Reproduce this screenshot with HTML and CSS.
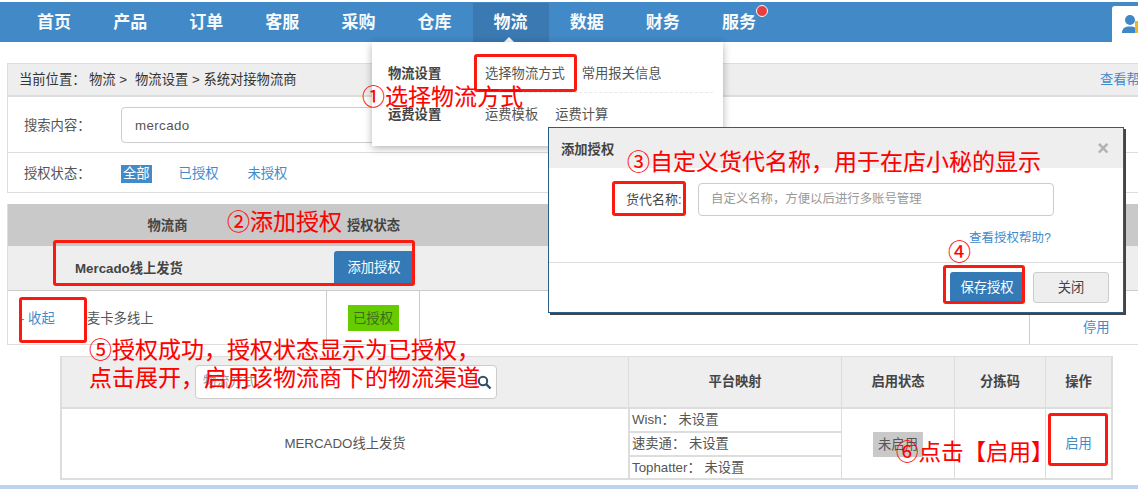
FILE: index.html
```html
<!DOCTYPE html>
<html lang="zh">
<head>
<meta charset="utf-8">
<title>物流设置</title>
<link rel="stylesheet" href="styles.css">
</head>
<body>
<div class="page">
  <nav class="nav">
    <a class="nav-item">首页</a><a class="nav-item">产品</a><a class="nav-item">订单</a><a class="nav-item">客服</a><a class="nav-item">采购</a><a class="nav-item">仓库</a><a class="nav-item active">物流</a><a class="nav-item">数据</a><a class="nav-item">财务</a><a class="nav-item dot">服务</a>
    <div class="user-tab">
      <svg class="user-icon" width="16" height="18" viewBox="0 0 16 18"><circle cx="8" cy="5" r="5" fill="#3f87c6"/><path d="M0 18c0-5 3-6.500 8-6.500s7 1.500 7 6.500z" fill="#3f87c6"/><rect x="13" y="6" width="3" height="12" fill="#f0b429"/></svg>
    </div>
  </nav>

  <section class="panel">
    <div class="crumb">
      <span class="crumb-label">当前位置：</span><span class="crumb-path">物流 &gt;</span><span class="crumb-path">物流设置 &gt; 系统对接物流商</span>
      <a class="link crumb-help">查看帮助</a>
    </div>
    <div class="search-row">
      <span class="row-label">搜索内容：</span>
      <div class="search-input">mercado</div>
    </div>
    <div class="status-row">
      <span class="row-label">授权状态：</span>
      <span class="pill">全部</span><a class="link status-link">已授权</a><a class="link status-link">未授权</a>
    </div>
  </section>

  <section class="carriers">
    <div class="carriers-head">
      <span>物流商</span><span>授权状态</span>
    </div>
    <div class="carrier-bar">
      <b class="carrier-name">Mercado线上发货</b>
      <span class="btn-primary add-btn">添加授权</span>
    </div>
    <div class="carrier-row">
      <div class="carrier-cell"><a class="link collapse">- 收起</a><span class="carrier-sub">麦卡多线上</span></div>
      <div class="carrier-status"><span class="badge-ok">已授权</span></div>
      <div></div>
      <div class="carrier-op"><a class="link">停用</a></div>
    </div>
  </section>

  <section class="channels">
    <div class="ch-cell ch-head ch-search-cell">
      <div class="ch-search">
        <span>物流方式</span>
        <svg width="15" height="15" viewBox="0 0 15 15"><circle cx="6" cy="6" r="4.2" fill="none" stroke="#2f4f66" stroke-width="2"/><path d="M9 9l4.500 4.500" stroke="#2f4f66" stroke-width="2.400"/></svg>
      </div>
    </div>
    <div class="ch-cell ch-head">平台映射</div>
    <div class="ch-cell ch-head">启用状态</div>
    <div class="ch-cell ch-head">分拣码</div>
    <div class="ch-cell ch-head">操作</div>
    <div class="ch-cell">MERCADO线上发货</div>
    <div class="ch-map">
      <div class="map-row">Wish： 未设置</div>
      <div class="map-row">速卖通： 未设置</div>
      <div class="map-row">Tophatter： 未设置</div>
    </div>
    <div class="ch-cell"><span class="badge-off">未启用</span></div>
    <div class="ch-cell"></div>
    <div class="ch-cell"><a class="link">启用</a></div>
  </section>

  <div class="bottom-band"></div>

  <div class="dropdown">
    <div class="dd-row dd-row-first"><b class="dd-title">物流设置</b><a class="dd-link">选择物流方式</a><a class="dd-link">常用报关信息</a></div>
    <div class="dd-row"><b class="dd-title">运费设置</b><a class="dd-link">运费模板</a><a class="dd-link">运费计算</a></div>
  </div>

  <div class="modal">
    <div class="modal-head"><b>添加授权</b><span class="modal-close">×</span></div>
    <div class="modal-body">
      <div class="modal-field"><span class="modal-label">货代名称:</span><div class="modal-input">自定义名称，方便以后进行多账号管理</div></div>
      <a class="link modal-help">查看授权帮助?</a>
    </div>
    <div class="modal-foot">
      <span class="btn-primary save-btn">保存授权</span>
      <span class="btn-default">关闭</span>
    </div>
  </div>

  <div class="box box-1"></div>
  <div class="box box-2"></div>
  <div class="box box-3"></div>
  <div class="box box-4"></div>
  <div class="box box-5"></div>
  <div class="box box-6"></div>

  <div class="note note-1">①选择物流方式</div>
  <div class="note note-2">②添加授权</div>
  <div class="note note-3">③自定义货代名称，用于在店小秘的显示</div>
  <div class="note note-4">④</div>
  <div class="note note-5">⑤授权成功，授权状态显示为已授权，<br>点击展开，启用该物流商下的物流渠道</div>
  <div class="note note-6">⑥点击【启用】</div>
</div>
</body>
</html>
```
FILE: styles.css
```css
* { box-sizing: border-box; }
html, body { margin: 0; padding: 0; height: 100%; overflow: hidden; background: #fff; }
body { font: 13.3px/18px "Liberation Sans", "Noto Sans CJK SC", sans-serif; color: #555; }
.page { position: relative; width: 1138px; height: 489px; overflow: hidden; padding-top: 2px; }
a { color: inherit; text-decoration: none; }
.link { color: #428bca; }

.nav { height: 40px; background: #4189c7; display: flex; padding-left: 16px; position: relative; }
.nav-item { width: 76.1px; padding-top: 2px; text-align: center; color: #fff; font-size: 17px; font-weight: 700; line-height: 38px; position: relative; opacity: .96; }
.nav-item.active { background: #3a79b2; margin-top: 1px; padding-top: 1px; }
.nav-item.active::after { content: ""; position: absolute; left: 31px; bottom: 0; border: 5px solid transparent; border-top: 0; border-bottom-color: #fff; }
.nav-item.dot::after { content: ""; position: absolute; right: 9px; top: 3px; width: 10px; height: 10px; border-radius: 50%; background: #ee3b3b; border: 1px solid #fff; }
.user-tab { position: absolute; right: 0; bottom: 0; width: 26px; height: 36px; background: #fff; border-radius: 3px 0 0 0; padding: 9px 0 0 10px; }
.user-icon { display: block; }

.panel { margin: 21px -30px 0 7px; border: 1px solid #ddd; height: 130px; }
.crumb { height: 33px; background: #eee; border-bottom: 2px solid #ddd; display: flex; align-items: center; padding: 1px 11px 0; color: #333; }
.crumb-label { width: 70px; }
.crumb-path { margin-right: 8px; }
.crumb-help { margin-left: auto; margin-right: 2px; width: 54px; }
.search-row { height: 56px; border-bottom: 1px solid #ddd; display: flex; align-items: center; padding-left: 16px; }
.row-label { width: 97px; }
.search-row .row-label { margin-top: 2px; }
.search-input { width: 400px; height: 36px; border: 1px solid #ccc; border-radius: 4px; padding: 0 13px; line-height: 35px; letter-spacing: .4px; }
.status-row { height: 39px; display: flex; align-items: center; padding: 2px 0 0 16px; }
.pill { background: #428bca; color: #fff; padding: 0 2px; line-height: 18px; margin-right: 27px; }
.status-link { margin-right: 29px; }

.carriers { margin: 11px -30px 0 7px; border: 1px solid #ddd; border-width: 0 0 1px 1px; }
.carriers-head { height: 42px; padding-top: 2px; background: #c9c9c9; display: grid; grid-template-columns: 319px 93px; align-items: center; text-align: center; font-weight: 700; color: #444; }
.carrier-bar { height: 45px; background: #eee; border-bottom: 1px solid #ccc; display: flex; align-items: center; padding-left: 67px; }
.carrier-name { width: 259px; color: #444; margin-top: 2px; }
.btn-primary { background: #337ab7; color: #fff; text-align: center; border-radius: 3px; display: block; }
.add-btn { width: 80px; height: 34px; line-height: 34px; margin-top: -1px; }
.carrier-row { height: 53px; display: grid; grid-template-columns: 319px 93px 609px 1fr; }
.carrier-cell { display: flex; align-items: center; padding: 2px 0 0 12px; border-right: 1px solid #ccc; }
.collapse { width: 67px; }
.carrier-status { border-right: 1px solid #ccc; display: flex; align-items: center; justify-content: center; padding-top: 1px; }
.badge-ok { background: #66cc00; color: #3d6b1a; width: 51px; height: 26px; line-height: 28px; text-align: center; }
.carrier-op { border-left: 1px solid #ccc; padding: 28px 0 0 53px; }

.channels { margin: 11px 25px 0 60px; height: 124px; border: 1px solid #ddd; border-width: 1px 2px 2px 2px; display: grid; grid-template-columns: 566px 213px 113px 91px 1fr; grid-template-rows: 52px 1fr; }
.ch-cell { display: flex; align-items: center; justify-content: center; border-left: 1px solid #ddd; }
.ch-cell:nth-child(5n+1) { border-left: 0; }
.ch-head { background: #eee; border-bottom: 2px solid #ddd; font-weight: 700; color: #444; }
.ch-search-cell { justify-content: flex-start; padding-left: 133px; }
.ch-search { width: 302px; height: 34px; background: #fff; border: 1px solid #ccc; border-radius: 4px; display: flex; align-items: center; justify-content: space-between; padding: 0 4px 0 7px; font-weight: 400; color: #999; }
.ch-map { display: flex; flex-direction: column; border-left: 2px solid #ddd; }
.map-row { flex: 1; line-height: 22px; padding-left: 2px; border-bottom: 2px solid #ddd; }
.map-row:last-child { border-bottom: 0; }
.badge-off { background: #c9c9c9; width: 50px; height: 25px; line-height: 25px; text-align: center; color: #555; }

.bottom-band { position: absolute; left: 0; right: 0; bottom: 0; height: 4px; background: #bdd3ec; }

.dropdown { position: absolute; left: 372px; top: 42px; width: 351px; height: 104px; background: #fff; box-shadow: 0 2px 8px rgba(0,0,0,.3); padding: 10px 10px 0 16px; color: #555; }
.dd-row { height: 41px; display: flex; align-items: center; padding-top: 3px; }
.dd-row-first { border-bottom: 1px dashed #e8e8e8; }
.dd-title { width: 97px; color: #444; }
.dd-link { margin-right: 17px; }

.modal { position: absolute; left: 548px; top: 127px; width: 576px; height: 186px; background: #fff; border: 1px solid #2c5d8a; box-shadow: 2px 2px 0 #444; }
.modal-head { height: 40px; background: #eee; display: flex; align-items: center; justify-content: space-between; padding: 3px 14px 0 12px; color: #444; }
.modal-close { font-size: 20px; font-weight: 700; color: #b0b0b0; margin-top: -3px; }
.modal-body { height: 94px; position: relative; }
.modal-field { display: flex; align-items: center; padding: 15px 0 0 62px; }
.modal-label { width: 87px; padding-left: 15px; color: #444; white-space: nowrap; font-size: 13px; }
.modal-input { width: 356px; height: 33px; border: 1px solid #ccc; border-radius: 4px; color: #999; font-size: 12.400px; line-height: 30px; padding-left: 12px; }
.modal-help { position: absolute; right: 72px; top: 61px; font-size: 12.500px; }
.modal-foot { height: 50px; border-top: 1px solid #ddd; display: flex; padding: 9px 14px 0 401px; gap: 9px; }
.save-btn { width: 74px; height: 31px; line-height: 31px; }
.btn-default { width: 76px; height: 31px; line-height: 29px; text-align: center; background: #eee; border: 1px solid #ccc; border-radius: 3px; color: #444; }

.box { position: absolute; border: 3px solid #fb1a10; border-radius: 3px; }
.box-1 { left: 474px; top: 54px; width: 103px; height: 38px; }
.box-2 { left: 53px; top: 240px; width: 362px; height: 46px; }
.box-3 { left: 19px; top: 297px; width: 68px; height: 46px; }
.box-4 { left: 612px; top: 181px; width: 74px; height: 35px; }
.box-5 { left: 943px; top: 265px; width: 82px; height: 39px; }
.box-6 { left: 1048px; top: 413px; width: 60px; height: 53px; }

.note { position: absolute; color: #f00; font-size: 23px; line-height: 28px; white-space: nowrap; -webkit-text-stroke: .1px #f00; }
.note-1 { left: 362px; top: 83px; }
.note-2 { left: 227px; top: 208px; }
.note-3 { left: 627px; top: 148px; }
.note-4 { left: 948px; top: 238px; }
.note-5 { left: 89px; top: 336px; }
.note-6 { left: 896px; top: 439px; font-size: 22.500px; }
```
